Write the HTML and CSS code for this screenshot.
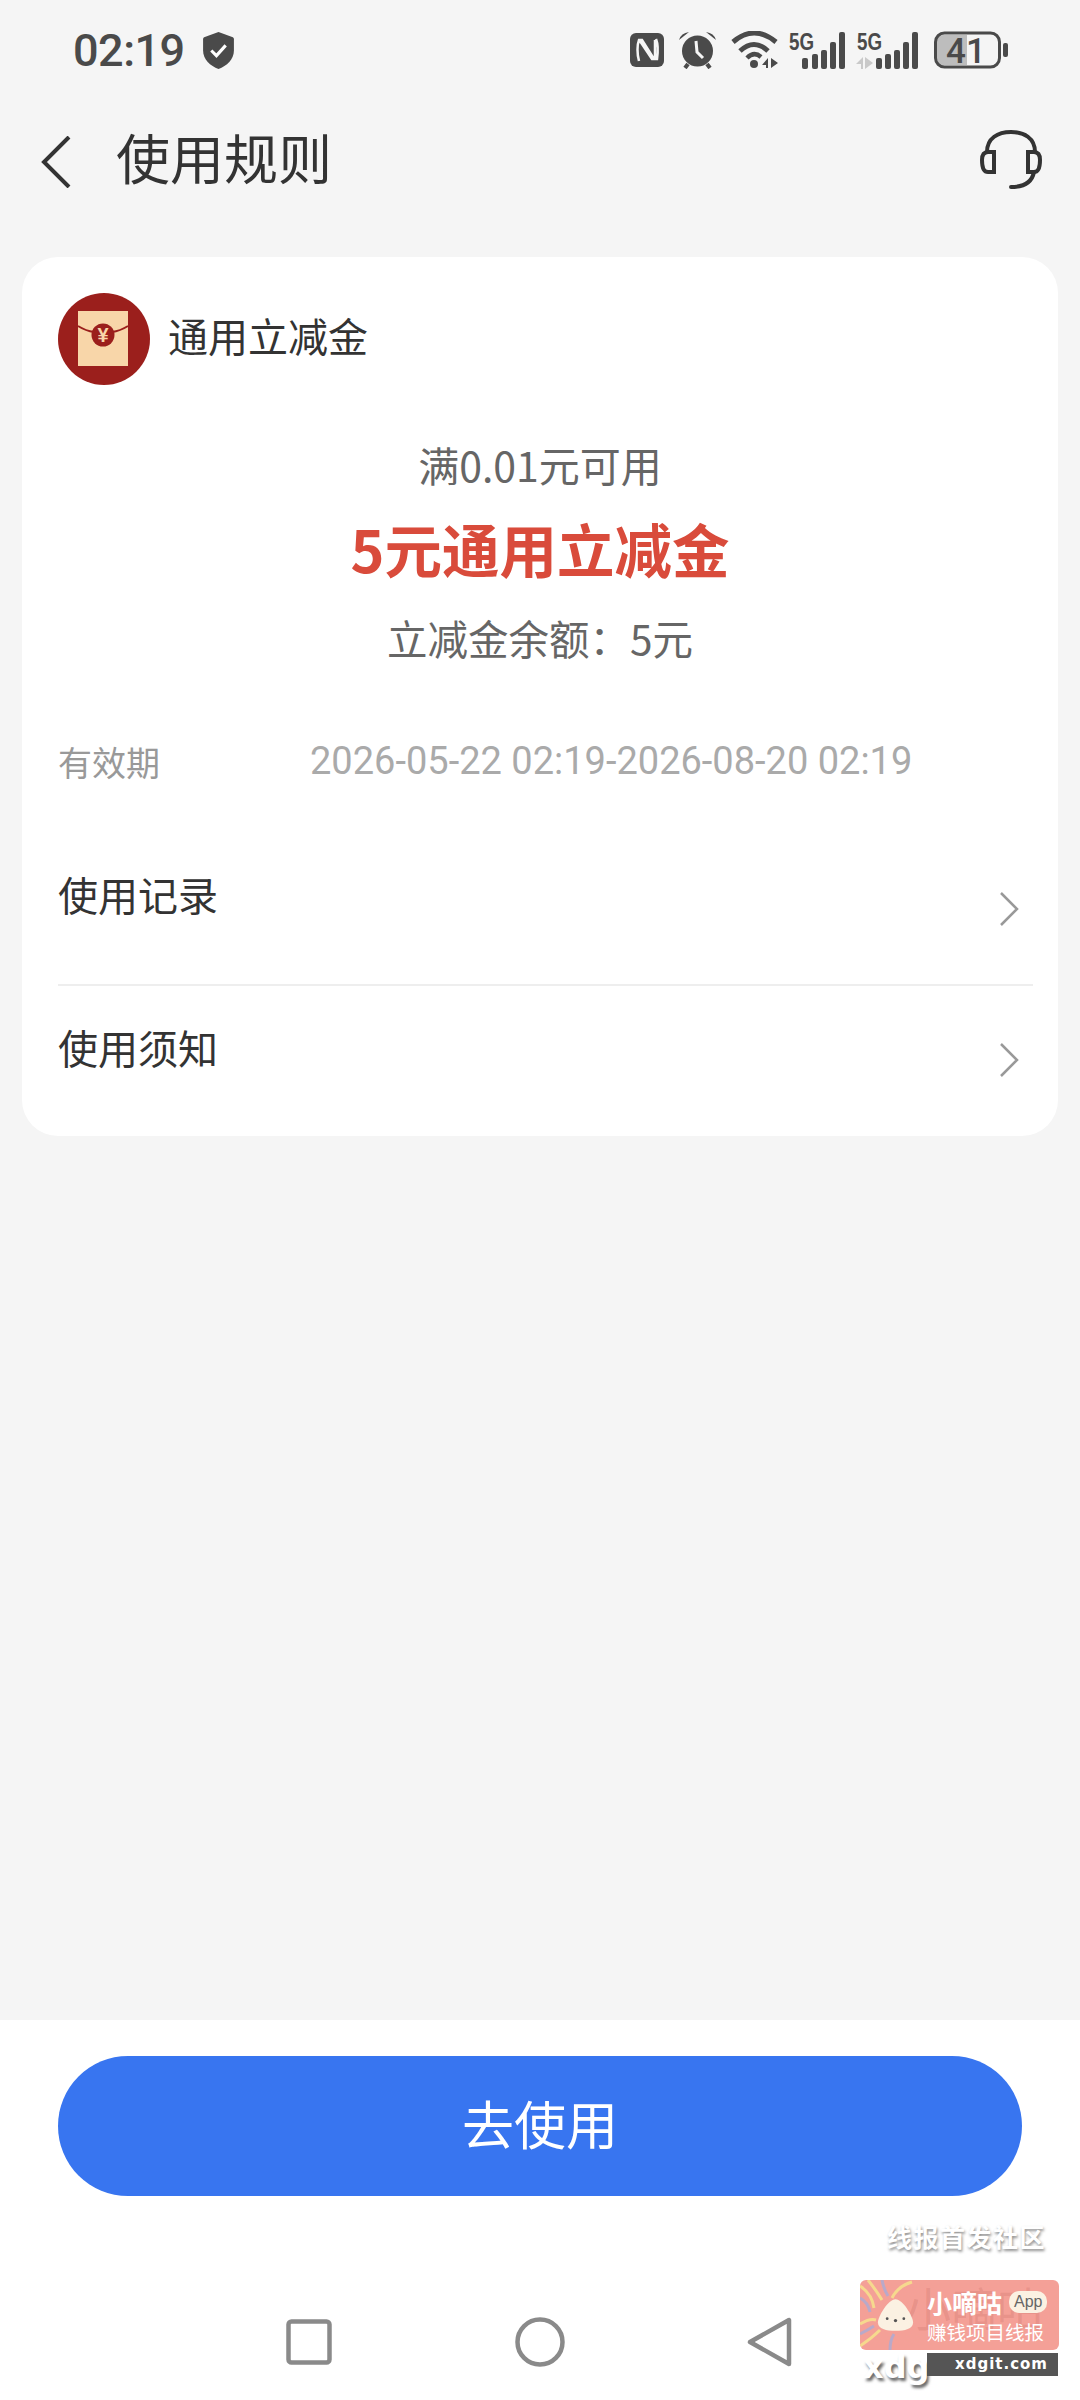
FILE: index.html
```html
<!DOCTYPE html>
<html lang="zh-CN">
<head>
  <meta charset="UTF-8">
  <title>使用规则</title>
  <link rel="stylesheet" href="styles.css">
</head>
<body>
  <div class="page">

    <div class="statusbar">
      <div class="status-left">
        <span class="time">02:19</span>
        <svg width="31" height="37" viewBox="0 0 30 36">
          <path d="M15 0 L29 5 Q30 5.500 30 7 V18 C30 27 23 33 15 36 C7 33 0 27 0 18 V7 Q0 5.500 1 5 Z" fill="#4a4a4a"/>
          <path d="M8 18 L13 23 L22 13" fill="none" stroke="#fff" stroke-width="3"/>
        </svg>
      </div>
      <div class="status-right">
        <svg width="34" height="36" viewBox="0 0 34 36">
          <rect y="1" width="34" height="34" rx="6" fill="#4a4a4a"/>
          <path d="M9 29 C7 22 7 13 9 8 H12 L24 27 H27 C28 20 28 12 26 7 M25 8 H25 V27 H22 L10 9" fill="none" stroke="#f5f5f5" stroke-width="2.500"/>
        </svg>
        <svg class="gap-alarm" width="39" height="38" viewBox="0 0 39 38">
          <circle cx="19.500" cy="20" r="15.500" fill="#4a4a4a"/>
          <path d="M1 9 Q3 2 11 1 Z M38 9 Q36 2 28 1 Z" fill="#4a4a4a"/>
          <path d="M7 37 L10 33 M32 37 L29 33" stroke="#4a4a4a" stroke-width="4"/>
          <path d="M18 10 L19 21 L25 27" fill="none" stroke="#f5f5f5" stroke-width="3"/>
        </svg>
        <svg class="gap-wifi" width="47" height="38" viewBox="0 0 47 38">
          <path d="M2 11 Q23 -7 45 11" fill="none" stroke="#4a4a4a" stroke-width="5"/>
          <path d="M9 20 Q23 7 37 20" fill="none" stroke="#4a4a4a" stroke-width="5"/>
          <path d="M16 27 Q23 20 30 26" fill="none" stroke="#4a4a4a" stroke-width="4.500"/>
          <circle cx="23" cy="33" r="4" fill="#4a4a4a"/>
          <path d="M31 34 L37 27 V37 H35 V34 Z M40 27 V37 L47 32 Z" fill="#4a4a4a"/>
        </svg>
        <svg class="gap-sig" width="57" height="38" viewBox="0 0 57 38">
          <text x="0" y="19" class="sig-text" textLength="25" lengthAdjust="spacingAndGlyphs">5G</text>
          <rect x="13" y="27" width="6" height="11" rx="2" fill="#4a4a4a"/>
          <rect x="23" y="23" width="6" height="15" rx="2" fill="#4a4a4a"/>
          <rect x="32" y="19" width="6" height="19" rx="2" fill="#4a4a4a"/>
          <rect x="41" y="11" width="6" height="27" rx="2" fill="#4a4a4a"/>
          <rect x="50" y="1" width="6" height="37" rx="2" fill="#4a4a4a"/>
        </svg>
        <svg class="gap-sig2" width="63" height="38" viewBox="0 0 63 38">
          <text x="1" y="19" class="sig-text" textLength="25" lengthAdjust="spacingAndGlyphs">5G</text>
          <path d="M0 33 L7 26 V38 H5 V33 Z M9 26 V38 L17 32 Z" fill="#c9c9c9"/>
          <rect x="20" y="27" width="6" height="11" rx="2" fill="#4a4a4a"/>
          <rect x="29" y="23" width="6" height="15" rx="2" fill="#4a4a4a"/>
          <rect x="38" y="19" width="6" height="19" rx="2" fill="#4a4a4a"/>
          <rect x="47" y="11" width="6" height="27" rx="2" fill="#4a4a4a"/>
          <rect x="56" y="1" width="6" height="37" rx="2" fill="#4a4a4a"/>
        </svg>
        <svg class="gap-bat" width="74" height="38" viewBox="0 0 74 38">
          <path d="M9 4 H33 V34 H9 Q3 34 3 28 V10 Q3 4 9 4 Z" fill="#bdbdbd"/>
          <rect x="1.500" y="2" width="64" height="34" rx="9" fill="none" stroke="#4a4a4a" stroke-width="3"/>
          <rect x="69" y="12" width="5" height="14" rx="2" fill="#4a4a4a"/>
          <text x="32" y="32" class="bat-text">41</text>
        </svg>
      </div>
    </div>

    <div class="header">
      <div class="header-left">
        <svg class="back" width="30" height="52" viewBox="0 0 30 52">
          <path d="M28 1 L3 26 L28 51" fill="none" stroke="#333" stroke-width="4"/>
        </svg>
        <h1 class="title">使用规则</h1>
      </div>
      <svg width="62" height="60" viewBox="0 0 62 60">
        <path d="M7 22 C7 8 18 2 31 2 C44 2 55 8 55 22" fill="none" stroke="#333" stroke-width="4"/>
        <path d="M14 22 H8 Q2 22 2 30 Q2 42 8 42 H14 Z" fill="none" stroke="#333" stroke-width="4"/>
        <path d="M48 22 H54 Q60 22 60 30 Q60 42 54 42 H48 Z" fill="none" stroke="#333" stroke-width="4"/>
        <path d="M54 42 C52 52 44 57 31 57" fill="none" stroke="#333" stroke-width="4" stroke-linecap="round"/>
      </svg>
    </div>

    <div class="card">
      <div class="card-head">
        <svg width="92" height="92" viewBox="0 0 92 92">
          <circle cx="46" cy="46" r="46" fill="#9b1f1c"/>
          <rect x="20" y="18" width="50" height="55" fill="#f8d6a9"/>
          <path d="M20 33 Q28 38 36 39 M70 33 Q62 38 54 39" fill="none" stroke="#9b1f1c" stroke-width="2"/>
          <circle cx="45" cy="42" r="11.500" fill="#9b1f1c"/>
          <text x="45" y="49" class="yen">¥</text>
        </svg>
        <span class="card-name">通用立减金</span>
      </div>
      <div class="summary">
        <p class="min-use">满0.01元可用</p>
        <p class="amount">5元通用立减金</p>
        <p class="balance">立减金余额：5元</p>
      </div>
      <div class="validity">
        <span class="validity-label">有效期</span>
        <span class="validity-date">2026-05-22 02:19-2026-08-20 02:19</span>
      </div>
      <div class="link-row first">
        <span>使用记录</span>
        <svg class="chevron" width="20" height="34" viewBox="0 0 20 34">
          <path d="M2 1 L18 17 L2 33" fill="none" stroke="#999" stroke-width="2.500"/>
        </svg>
      </div>
      <div class="link-row">
        <span>使用须知</span>
        <svg class="chevron" width="20" height="34" viewBox="0 0 20 34">
          <path d="M2 1 L18 17 L2 33" fill="none" stroke="#999" stroke-width="2.500"/>
        </svg>
      </div>
    </div>

    <div class="spacer"></div>

    <div class="bottom">
      <button class="btn-use"><span>去使用</span></button>
      <div class="navbar">
        <svg width="46" height="46" viewBox="0 0 46 46">
          <rect x="2.500" y="2.500" width="41" height="41" rx="3" fill="none" stroke="#8a8a8a" stroke-width="4.500"/>
        </svg>
        <svg width="50" height="50" viewBox="0 0 50 50">
          <circle cx="25" cy="25" r="22.500" fill="none" stroke="#8a8a8a" stroke-width="4.500"/>
        </svg>
        <svg width="46" height="50" viewBox="0 0 46 50">
          <path d="M42 3 V47 L3 25 Z" fill="none" stroke="#8a8a8a" stroke-width="4.500" stroke-linejoin="round"/>
        </svg>
      </div>
    </div>

    <div class="wm-caption">线报首发社区</div>
    <div class="wm-badge">
      <svg class="wm-swirl" width="60" height="70" viewBox="0 0 60 70">
        <path d="M0 6 Q12 14 14 28 M0 44 Q10 38 16 40 M0 66 Q12 58 20 50 M8 0 Q16 10 22 20 M52 2 Q38 6 32 18" fill="none" stroke="#f6d98e" stroke-width="3"/>
        <path d="M0 18 Q8 22 10 32 M0 54 Q8 50 14 46 M22 0 Q24 10 28 16 M30 70 Q30 60 34 54" fill="none" stroke="#b9a9c9" stroke-width="3"/>
      </svg>
      <span class="wm-ghost">小嘀咕</span>
      <svg class="wm-mascot" width="37" height="34" viewBox="0 0 40 36">
        <path d="M20 1 C28 1 39 20 39 26 C39 33 30 35 20 35 C10 35 1 33 1 26 C1 20 12 1 20 1 Z" fill="#fbf1e2"/>
        <circle cx="11" cy="22" r="1.500" fill="#555"/>
        <circle cx="20" cy="24" r="1.800" fill="#555"/>
        <circle cx="29" cy="22" r="1.500" fill="#555"/>
      </svg>
      <div class="wm-lines">
        <div class="wm-top"><span class="wm-name">小嘀咕</span><span class="wm-app">App</span></div>
        <div class="wm-sub">赚钱项目线报</div>
      </div>
    </div>
    <div class="wm-site">
      <span class="wm-xdg">xdg</span>
      <span class="wm-url">xdgit.com</span>
    </div>

  </div>
</body>
</html>
```

FILE: styles.css
```css
* {
  box-sizing: border-box;
}

body {
  margin: 0;
  font-family: "Noto Sans CJK SC", "Noto Sans", sans-serif;
  background-color: #f5f5f5;
  color: #333;
}

p, h1 {
  margin: 0;
  font-weight: 400;
}

.page {
  position: relative;
  width: 1080px;
  height: 2400px;
  display: flex;
  flex-direction: column;
  overflow: hidden;
}

/* status bar */
.statusbar {
  height: 100px;
  flex: none;
  display: flex;
  justify-content: space-between;
  align-items: center;
  padding: 0 72px 0 73px;
}

.status-left {
  display: flex;
  align-items: center;
  gap: 18px;
}

.time {
  font-family: Roboto, sans-serif;
  font-size: 45px;
  font-weight: 500;
  letter-spacing: -0.5px;
  color: #4a4a4a;
  line-height: 1;
}

.status-right {
  display: flex;
  align-items: center;
}

.gap-alarm { margin-left: 14px; }
.gap-wifi { margin-left: 14px; }
.gap-sig { margin-left: 11px; }
.gap-sig2 { margin-left: 10px; }
.gap-bat { margin-left: 15px; }

.sig-text {
  font-family: "Liberation Sans", sans-serif;
  font-size: 24px;
  font-weight: 700;
  fill: #4a4a4a;
}

.bat-text {
  font-family: Roboto, sans-serif;
  font-size: 35px;
  font-weight: 500;
  fill: #4a4a4a;
  text-anchor: middle;
}

/* header */
.header {
  height: 120px;
  flex: none;
  display: flex;
  justify-content: space-between;
  align-items: center;
  padding: 0 38px 0 41px;
}

.header-left {
  display: flex;
  align-items: center;
  gap: 45px;
}

.back {
  margin-top: 4px;
}

.title {
  font-size: 54px;
  line-height: 60px;
  padding-bottom: 6px;
  color: #333;
}

/* card */
.card {
  margin: 37px 22px 0;
  height: 879px;
  flex: none;
  background-color: #fff;
  border-radius: 36px;
  padding: 36px 25px 0 36px;
}

.card-head {
  display: flex;
  align-items: center;
  gap: 18px;
}

.card-name {
  font-size: 40px;
  line-height: 60px;
  padding-bottom: 8px;
  color: #333;
}

.yen {
  font-family: "Liberation Sans", sans-serif;
  font-size: 20px;
  font-weight: 700;
  fill: #f8d6a9;
  text-anchor: middle;
}

.summary {
  text-align: center;
  margin-top: 49px;
  padding-right: 11px;
}

.min-use {
  font-size: 41px;
  line-height: 60px;
  color: #666;
}

.amount {
  font-size: 57.500px;
  line-height: 76px;
  font-weight: 700;
  color: #d94b3b;
  margin-top: 16px;
}

.balance {
  font-size: 40.500px;
  line-height: 60px;
  color: #666;
  margin-top: 22px;
}

.validity {
  display: flex;
  align-items: center;
  margin-top: 63px;
  height: 60px;
}

.validity-label {
  width: 252px;
  font-size: 34px;
  color: #999;
}

.validity-date {
  font-family: Roboto, sans-serif;
  font-size: 38px;
  color: #aaa;
}

.link-row {
  display: flex;
  justify-content: space-between;
  height: 149px;
  padding: 31px 14px 0 0;
  font-size: 40px;
  line-height: 60px;
  color: #333;
}

.link-row.first {
  height: 195px;
  padding-top: 73px;
  border-bottom: 2px solid #eee;
}

.link-row .chevron {
  margin-top: 26px;
}

.link-row.first .chevron {
  margin-top: 28px;
}

.spacer {
  flex: 1;
}

/* bottom */
.bottom {
  height: 380px;
  flex: none;
  background-color: #fff;
  padding: 36px 58px 0;
}

.btn-use {
  display: block;
  width: 100%;
  height: 140px;
  padding: 0 0 8px;
  border: none;
  border-radius: 70px;
  background-color: #3875f0;
  color: #fff;
  font-family: inherit;
  font-size: 52px;
}

.navbar {
  display: flex;
  justify-content: space-between;
  align-items: center;
  padding: 0 229px 0 228px;
  margin-top: 121px;
}

/* watermark */
.wm-caption {
  position: absolute;
  left: 887px;
  top: 2218px;
  font-size: 25px;
  line-height: 36px;
  font-weight: 700;
  letter-spacing: 1.500px;
  color: #fff;
  text-shadow: 1px 2px 3px rgba(0, 0, 0, 0.45);
}

.wm-badge {
  position: absolute;
  left: 860px;
  top: 2280px;
  width: 199px;
  height: 70px;
  background-color: #f4a097;
  border-radius: 6px;
  display: flex;
  align-items: center;
  gap: 13px;
  padding-left: 17px;
  overflow: hidden;
}

.wm-swirl {
  position: absolute;
  left: 0;
  top: 0;
}

.wm-ghost {
  position: absolute;
  left: 45px;
  top: -4px;
  font-size: 46px;
  line-height: 60px;
  color: rgba(150, 60, 50, 0.14);
}

.wm-mascot,
.wm-lines {
  position: relative;
}

.wm-lines {
  color: #fff;
}

.wm-top {
  display: flex;
  align-items: center;
  gap: 7px;
}

.wm-name {
  font-size: 25px;
  line-height: 34px;
  font-weight: 700;
}

.wm-app {
  font-family: "Liberation Sans", sans-serif;
  font-size: 16px;
  line-height: 22px;
  padding: 0 5px;
  border-radius: 10px;
  background-color: #fbf1e2;
  color: #666;
}

.wm-sub {
  font-size: 19.500px;
  line-height: 26px;
}

.wm-site {
  position: absolute;
  left: 863px;
  top: 2349px;
  display: flex;
}

.wm-xdg {
  width: 64px;
  font-family: "DejaVu Sans", sans-serif;
  font-size: 32px;
  line-height: 36px;
  font-weight: 700;
  color: #fff;
  text-shadow: 2px 3px 3px rgba(0, 0, 0, 0.6);
}

.wm-url {
  width: 131px;
  height: 23px;
  margin-top: 4px;
  padding-right: 10px;
  background-color: #555;
  color: #fff;
  font-family: "DejaVu Sans", sans-serif;
  font-size: 15px;
  line-height: 23px;
  font-weight: 700;
  letter-spacing: 1px;
  text-align: right;
}
```
